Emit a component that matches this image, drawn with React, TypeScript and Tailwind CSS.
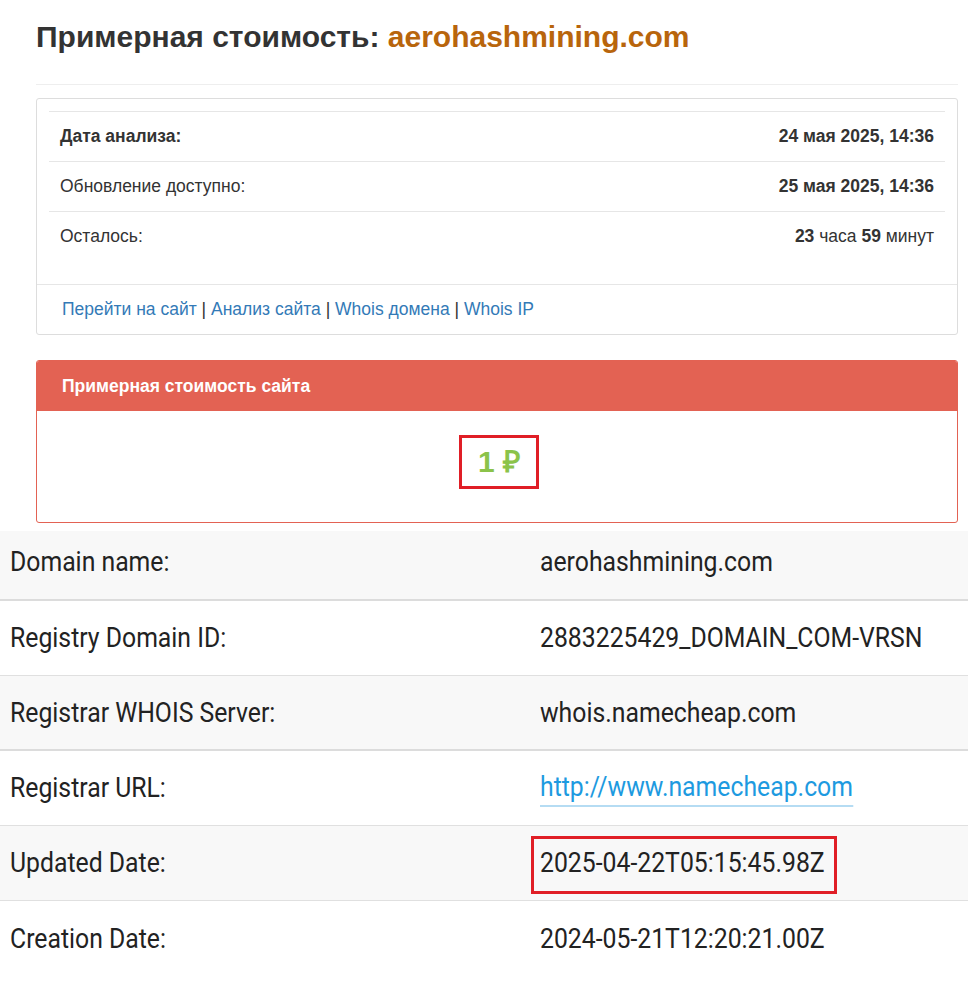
const info = [
  { label: 'Дата анализа:', value: <b>24 мая 2025, 14:36</b>, bold: true },
  { label: 'Обновление доступно:', value: <b>25 мая 2025, 14:36</b> },
  {
    label: 'Осталось:',
    value: (
      <>
        <b>23</b> часа <b>59</b> минут
      </>
    ),
  },
];

const whois = [
  { label: 'Domain name:', value: 'aerohashmining.com' },
  { label: 'Registry Domain ID:', value: '2883225429_DOMAIN_COM-VRSN' },
  { label: 'Registrar WHOIS Server:', value: 'whois.namecheap.com' },
  { label: 'Registrar URL:', value: 'http://www.namecheap.com', link: true },
  { label: 'Updated Date:', value: '2025-04-22T05:15:45.98Z', marked: true },
  { label: 'Creation Date:', value: '2024-05-21T12:20:21.00Z' },
];

export default function App() {
  return (
    <div className="w-[968px] h-[990px] overflow-hidden bg-white">
      <div className="pl-9 pr-[10px] font-['Liberation_Sans',Arial,sans-serif] text-[#333]">
        <h1 className="pt-[20px] pb-[30px] border-b border-[#eee] text-[30px] leading-[34px] font-bold">
          Примерная стоимость: <span className="text-[#b8650c]">aerohashmining.com</span>
        </h1>

        <div className="mt-[13px] border border-[#ddd] rounded-[3px]">
          <div className="px-3 pt-3 pb-[23px]">
            {info.map((row, i) => (
              <div
                key={i}
                className="h-[50px] border-t border-[#e6e6e6] flex items-center justify-between px-[11px] text-[17.5px]"
              >
                <span className={row.bold ? 'font-bold' : ''}>{row.label}</span>
                <span>{row.value}</span>
              </div>
            ))}
          </div>
          <div className="h-[50px] border-t border-[#e6e6e6] flex items-center px-[25px] text-[17.5px] whitespace-pre">
            <a className="text-[#337ab7]">Перейти на сайт</a>
            <span> | </span>
            <a className="text-[#337ab7]">Анализ сайта</a>
            <span> | </span>
            <a className="text-[#337ab7]">Whois домена</a>
            <span> | </span>
            <a className="text-[#337ab7]">Whois IP</a>
          </div>
        </div>

        <div className="mt-[25px] border border-[#e36253] rounded-[3px] overflow-hidden">
          <div className="h-[50px] bg-[#e36253] flex items-center px-[25px] text-white font-bold text-[17.5px]">
            Примерная стоимость сайта
          </div>
          <div className="h-[111px] flex items-center justify-center">
            <div className="w-[80px] h-[54px] ml-[4px] mt-[-10px] border-[3px] border-[#e01e26] flex items-center justify-center text-[30px] font-bold text-[#8bc34a]">
              1 ₽
            </div>
          </div>
        </div>
      </div>

      <div className="mt-[8px] font-['Roboto',sans-serif] text-[28px] leading-[34px] text-[#222] whitespace-nowrap">
        {whois.map((row, i) => (
          <div
            key={i}
            className={`flex items-center ${i === 0 ? 'h-[70px] pb-[6px]' : 'h-[75px]'} ${
              i % 2 === 0 ? 'bg-[#f8f8f8]' : 'bg-white'
            } ${i === 0 || i === 2 ? 'border-b-2 border-[#dcdcdc]' : 'border-b border-[#e0e0e0]'} ${
              i === 5 ? 'border-b-0' : ''
            }`}
          >
            <div className="w-[540px] pl-[10px] shrink-0">
              <span className="inline-block scale-x-[0.885] origin-left">{row.label}</span>
            </div>
            <div className="relative flex-1">
              {row.link ? (
                <a className="inline-block scale-x-[0.885] origin-left text-[#1d9ae0] border-b-2 border-[#b5dcf3] leading-[36px]">
                  {row.value}
                </a>
              ) : (
                <span className="inline-block scale-x-[0.885] origin-left">{row.value}</span>
              )}
              {row.marked && (
                <div className="absolute left-[-9px] w-[306px] top-[-10px] bottom-[-14px] border-[3px] border-[#e01e26]" />
              )}
            </div>
          </div>
        ))}
      </div>
    </div>
  );
}
